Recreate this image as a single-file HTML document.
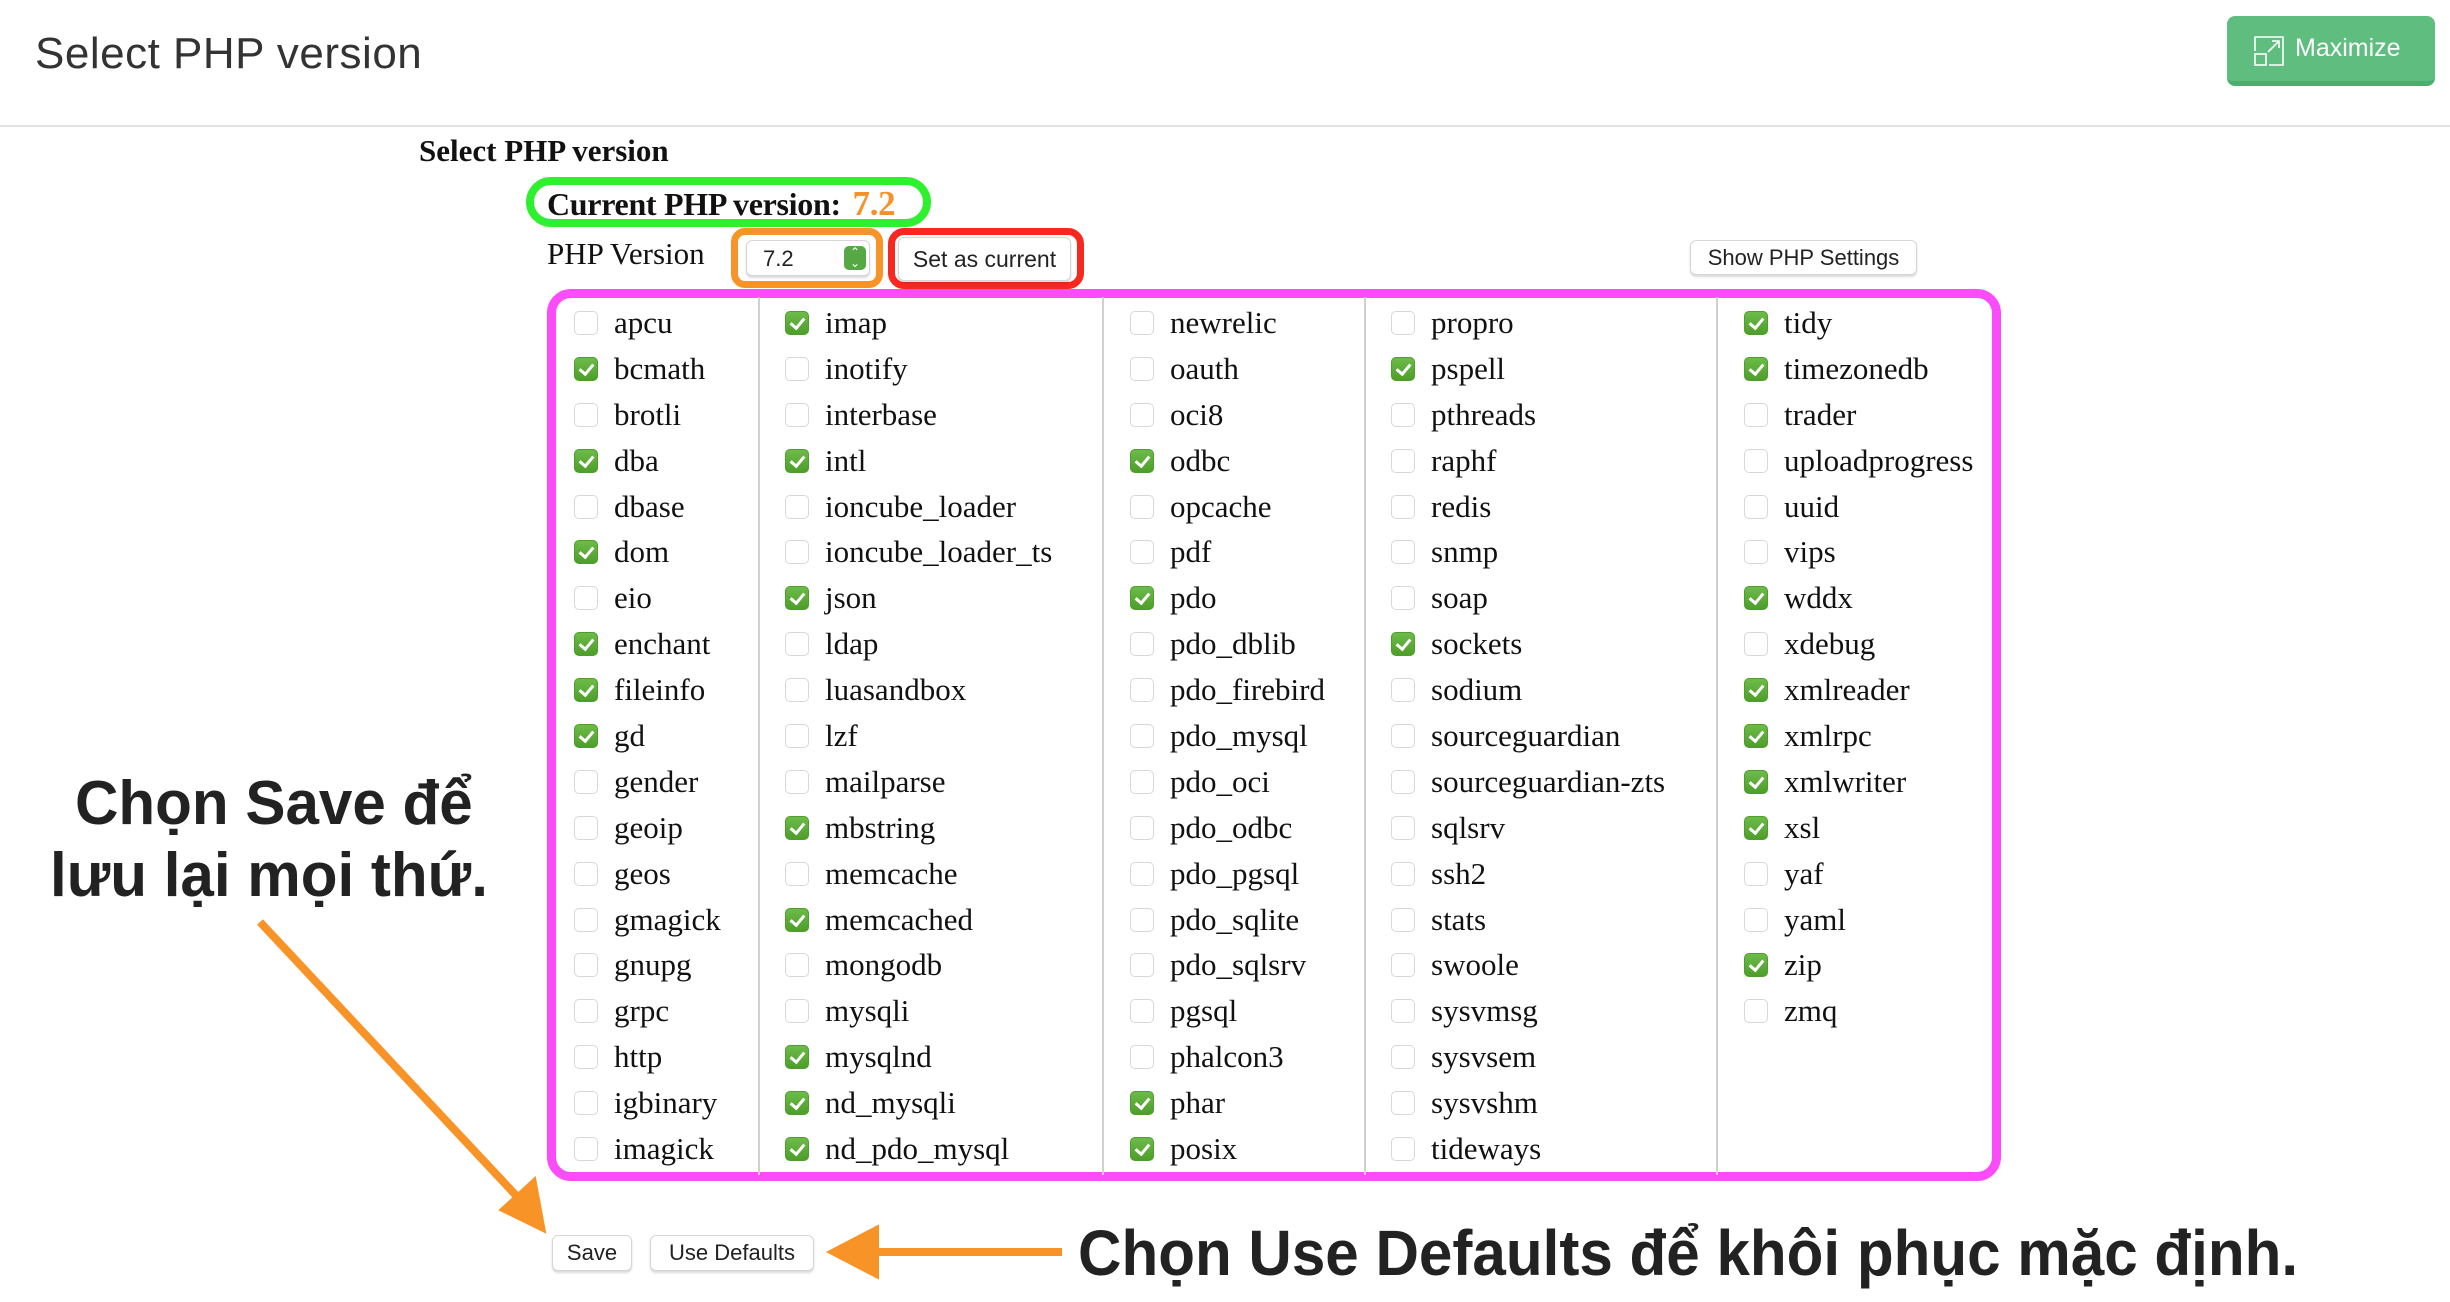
<!DOCTYPE html>
<html><head><meta charset="utf-8">
<style>
*{margin:0;padding:0;box-sizing:border-box}
body{width:2450px;height:1302px;background:#fff;position:relative;overflow:hidden;font-family:"Liberation Serif",serif;color:#111}
.abs{position:absolute}
.h1{left:35px;top:29px;font:44px "Liberation Sans",sans-serif;color:#333;letter-spacing:0.5px}
.hr{left:0;top:125px;width:2450px;height:2px;background:#e2e2e2}
.max{left:2227px;top:16px;width:208px;height:70px;background:#5fbe7f;border-radius:8px;border-bottom:5px solid #4caf6e;color:#fff;font:25px "Liberation Sans",sans-serif}
.btn{background:#fff;border:1px solid #d6d6d6;border-radius:6px;box-shadow:0 2px 2px rgba(0,0,0,.15);font:22px "Liberation Sans",sans-serif;color:#222;text-align:center}
.col{position:absolute;top:300px}
.it{height:45.9px;line-height:45.9px;font-size:31px;white-space:nowrap;position:relative;padding-left:40px}
.cb{position:absolute;left:0;top:11px;width:24px;height:24px;border:1px solid #d8d8d8;border-radius:5px;background:#fff}
.cb.y{background:linear-gradient(#6dbb49,#4e9e2c);border-color:#4e9e2c}
.cb.y::after{content:"";position:absolute;left:7px;top:3px;width:6px;height:11px;border:solid #fff;border-width:0 3px 3px 0;transform:rotate(40deg)}
.sep{position:absolute;top:297px;width:2px;height:878px;background:#d0d0d0}
.ann{font-family:"Liberation Sans",sans-serif;font-weight:bold;color:#222;white-space:nowrap;transform-origin:left top}
</style></head><body>
<div class="abs h1">Select PHP version</div>
<div class="abs hr"></div>
<div class="abs max">
<svg class="abs" style="left:27px;top:20px" width="30" height="30" viewBox="0 0 30 30" fill="none" stroke="#fff" stroke-width="1.6"><path d="M1 15V1h28v28H15"/><rect x="1" y="18" width="11" height="11"/><path d="M14 16L25 5M18 5h7v7"/></svg>
<div class="abs" style="left:68px;top:18px">Maximize</div></div>

<div class="abs" style="left:419px;top:133px;font-size:31px;font-weight:bold">Select PHP version</div>
<div class="abs" style="left:526px;top:177px;width:405px;height:50px;border:8px solid #2ef02e;border-radius:25px"></div>
<div class="abs" style="left:547px;top:184px;font-size:32px;font-weight:bold;letter-spacing:-0.3px">Current PHP version: <span style="color:#f7902a;font-size:35px;margin-left:4px">7.2</span></div>
<div class="abs" style="left:547px;top:236px;font-size:31px">PHP Version</div>
<div class="abs" style="left:731px;top:228px;width:152px;height:60px;border:7px solid #f79327;border-radius:14px"></div>
<div class="abs btn" style="left:746px;top:240px;width:124px;height:36px;text-align:left;padding:5px 0 0 16px">7.2
<div class="abs" style="left:97px;top:5px;width:22px;height:24px;background:#55a843;border-radius:5px;color:#fff;font-size:12px;line-height:11px;text-align:center;padding-top:1px">⌃<br>⌄</div></div>
<div class="abs" style="left:888px;top:228px;width:196px;height:61px;border:7px solid #f7281f;border-radius:16px"></div>
<div class="abs btn" style="left:898px;top:237px;width:173px;height:44px;line-height:42px;font-size:23px">Set as current</div>
<div class="abs btn" style="left:1690px;top:240px;width:227px;height:35px;line-height:33px">Show PHP Settings</div>

<div class="abs" style="left:547px;top:289px;width:1454px;height:892px;border:9px solid #fb4cf9;border-radius:24px"></div>
<div class="sep" style="left:758px"></div><div class="sep" style="left:1102px"></div><div class="sep" style="left:1364px"></div><div class="sep" style="left:1716px"></div>

<div class="col" style="left:574px">
<div class="it"><i class="cb"></i>apcu</div><div class="it"><i class="cb y"></i>bcmath</div><div class="it"><i class="cb"></i>brotli</div><div class="it"><i class="cb y"></i>dba</div><div class="it"><i class="cb"></i>dbase</div><div class="it"><i class="cb y"></i>dom</div><div class="it"><i class="cb"></i>eio</div><div class="it"><i class="cb y"></i>enchant</div><div class="it"><i class="cb y"></i>fileinfo</div><div class="it"><i class="cb y"></i>gd</div><div class="it"><i class="cb"></i>gender</div><div class="it"><i class="cb"></i>geoip</div><div class="it"><i class="cb"></i>geos</div><div class="it"><i class="cb"></i>gmagick</div><div class="it"><i class="cb"></i>gnupg</div><div class="it"><i class="cb"></i>grpc</div><div class="it"><i class="cb"></i>http</div><div class="it"><i class="cb"></i>igbinary</div><div class="it"><i class="cb"></i>imagick</div>
</div>
<div class="col" style="left:785px">
<div class="it"><i class="cb y"></i>imap</div><div class="it"><i class="cb"></i>inotify</div><div class="it"><i class="cb"></i>interbase</div><div class="it"><i class="cb y"></i>intl</div><div class="it"><i class="cb"></i>ioncube_loader</div><div class="it"><i class="cb"></i>ioncube_loader_ts</div><div class="it"><i class="cb y"></i>json</div><div class="it"><i class="cb"></i>ldap</div><div class="it"><i class="cb"></i>luasandbox</div><div class="it"><i class="cb"></i>lzf</div><div class="it"><i class="cb"></i>mailparse</div><div class="it"><i class="cb y"></i>mbstring</div><div class="it"><i class="cb"></i>memcache</div><div class="it"><i class="cb y"></i>memcached</div><div class="it"><i class="cb"></i>mongodb</div><div class="it"><i class="cb"></i>mysqli</div><div class="it"><i class="cb y"></i>mysqlnd</div><div class="it"><i class="cb y"></i>nd_mysqli</div><div class="it"><i class="cb y"></i>nd_pdo_mysql</div>
</div>
<div class="col" style="left:1130px">
<div class="it"><i class="cb"></i>newrelic</div><div class="it"><i class="cb"></i>oauth</div><div class="it"><i class="cb"></i>oci8</div><div class="it"><i class="cb y"></i>odbc</div><div class="it"><i class="cb"></i>opcache</div><div class="it"><i class="cb"></i>pdf</div><div class="it"><i class="cb y"></i>pdo</div><div class="it"><i class="cb"></i>pdo_dblib</div><div class="it"><i class="cb"></i>pdo_firebird</div><div class="it"><i class="cb"></i>pdo_mysql</div><div class="it"><i class="cb"></i>pdo_oci</div><div class="it"><i class="cb"></i>pdo_odbc</div><div class="it"><i class="cb"></i>pdo_pgsql</div><div class="it"><i class="cb"></i>pdo_sqlite</div><div class="it"><i class="cb"></i>pdo_sqlsrv</div><div class="it"><i class="cb"></i>pgsql</div><div class="it"><i class="cb"></i>phalcon3</div><div class="it"><i class="cb y"></i>phar</div><div class="it"><i class="cb y"></i>posix</div>
</div>
<div class="col" style="left:1391px">
<div class="it"><i class="cb"></i>propro</div><div class="it"><i class="cb y"></i>pspell</div><div class="it"><i class="cb"></i>pthreads</div><div class="it"><i class="cb"></i>raphf</div><div class="it"><i class="cb"></i>redis</div><div class="it"><i class="cb"></i>snmp</div><div class="it"><i class="cb"></i>soap</div><div class="it"><i class="cb y"></i>sockets</div><div class="it"><i class="cb"></i>sodium</div><div class="it"><i class="cb"></i>sourceguardian</div><div class="it"><i class="cb"></i>sourceguardian-zts</div><div class="it"><i class="cb"></i>sqlsrv</div><div class="it"><i class="cb"></i>ssh2</div><div class="it"><i class="cb"></i>stats</div><div class="it"><i class="cb"></i>swoole</div><div class="it"><i class="cb"></i>sysvmsg</div><div class="it"><i class="cb"></i>sysvsem</div><div class="it"><i class="cb"></i>sysvshm</div><div class="it"><i class="cb"></i>tideways</div>
</div>
<div class="col" style="left:1744px">
<div class="it"><i class="cb y"></i>tidy</div><div class="it"><i class="cb y"></i>timezonedb</div><div class="it"><i class="cb"></i>trader</div><div class="it"><i class="cb"></i>uploadprogress</div><div class="it"><i class="cb"></i>uuid</div><div class="it"><i class="cb"></i>vips</div><div class="it"><i class="cb y"></i>wddx</div><div class="it"><i class="cb"></i>xdebug</div><div class="it"><i class="cb y"></i>xmlreader</div><div class="it"><i class="cb y"></i>xmlrpc</div><div class="it"><i class="cb y"></i>xmlwriter</div><div class="it"><i class="cb y"></i>xsl</div><div class="it"><i class="cb"></i>yaf</div><div class="it"><i class="cb"></i>yaml</div><div class="it"><i class="cb y"></i>zip</div><div class="it"><i class="cb"></i>zmq</div>
</div>

<div class="abs btn" style="left:552px;top:1235px;width:80px;height:36px;line-height:34px">Save</div>
<div class="abs btn" style="left:650px;top:1235px;width:164px;height:36px;line-height:34px">Use Defaults</div>

<div class="abs ann" style="left:75px;top:768px;font-size:62px;transform:scaleX(0.97)">Chọn Save để</div>
<div class="abs ann" style="left:50px;top:840px;font-size:62px;transform:scaleX(0.97)">lưu lại mọi thứ.</div>
<div class="abs ann" style="left:1078px;top:1216px;font-size:64px;transform:scaleX(0.94)">Chọn Use Defaults để khôi phục mặc định.</div>

<svg class="abs" style="left:0;top:0" width="2450" height="1302">
<g fill="#f79327" stroke="#f79327">
<line x1="260" y1="922" x2="525" y2="1205" stroke-width="8"/>
<polygon points="545,1232 500,1210 535,1178" stroke-width="2"/>
<line x1="1062" y1="1252" x2="860" y2="1252" stroke-width="8"/>
<polygon points="828,1252 878,1226 878,1278" stroke-width="2"/>
</g></svg>
</body></html>
